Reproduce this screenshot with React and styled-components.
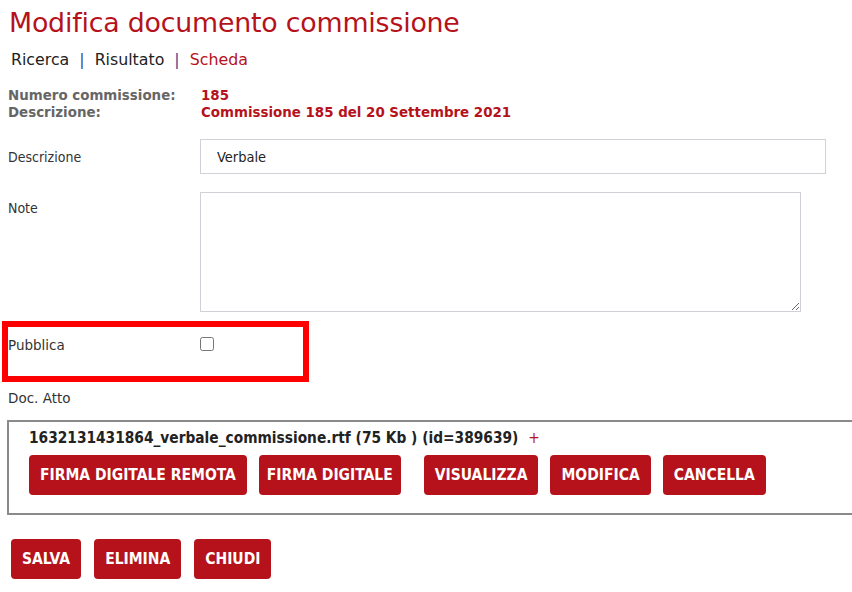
import React from "react";
import styled, { createGlobalStyle } from "styled-components";

const GlobalStyle = createGlobalStyle`
  html, body {
    margin: 0;
    padding: 0;
    background: #ffffff;
    overflow: hidden;
  }
`;

const RED = "#b5121b";

const App = () => {
  return (
    <Page>
      <GlobalStyle />
      <Title>Modifica documento commissione</Title>
      <Breadcrumb>
        <Crumb>Ricerca</Crumb>
        <Sep>|</Sep>
        <Crumb>Risultato</Crumb>
        <Sep>|</Sep>
        <Crumb $active>Scheda</Crumb>
      </Breadcrumb>

      <Info>
        <InfoLabel>Numero commissione:</InfoLabel>
        <InfoValue>185</InfoValue>
        <InfoLabel>Descrizione:</InfoLabel>
        <InfoValue>Commissione 185 del 20 Settembre 2021</InfoValue>
      </Info>

      <FormRow>
        <Label>Descrizione</Label>
        <TextInput defaultValue="Verbale" />
      </FormRow>

      <FormRow $top>
        <Label $offset>Note</Label>
        <TextArea />
      </FormRow>

      <Highlight>
        <Plain>Pubblica</Plain>
        <Check type="checkbox" />
      </Highlight>

      <SectionTitle>Doc. Atto</SectionTitle>

      <DocBox>
        <FileName>
          1632131431864_verbale_commissione.rtf (75 Kb ) (id=389639)
          <Plus>+</Plus>
        </FileName>
        <ButtonRow>
          <Button>FIRMA DIGITALE REMOTA</Button>
          <Button $narrow>FIRMA DIGITALE</Button>
          <Button $spaced>VISUALIZZA</Button>
          <Button>MODIFICA</Button>
          <Button>CANCELLA</Button>
        </ButtonRow>
      </DocBox>

      <Actions>
        <Button $small>SALVA</Button>
        <Button $small>ELIMINA</Button>
        <Button $small>CHIUDI</Button>
      </Actions>
    </Page>
  );
};

const Page = styled.div`
  padding: 6px 0 0 0;
  font-family: "DejaVu Sans", Verdana, sans-serif;
  width: 852px;
`;

const Title = styled.h1`
  margin: 0 0 0 9px;
  font-size: 26.8px;
  font-weight: normal;
  color: ${RED};
  letter-spacing: -0.2px;
  line-height: 34px;
`;

const Breadcrumb = styled.nav`
  display: flex;
  gap: 10px;
  margin: 9px 0 0 11px;
  font-size: 15.8px;
  line-height: 22px;
`;

const Crumb = styled.a`
  color: ${(p) => (p.$active ? RED : "#222222")};
  text-decoration: none;
`;

const Sep = styled.span`
  color: #3b4a8f;
`;

const Info = styled.div`
  display: grid;
  grid-template-columns: 193px auto;
  margin: 16px 0 0 8px;
  font-size: 13.4px;
  font-weight: bold;
  line-height: 17px;
`;

const InfoLabel = styled.span`
  color: #666666;
`;

const InfoValue = styled.span`
  color: ${RED};
`;

const FormRow = styled.div`
  display: grid;
  grid-template-columns: 192px auto;
  align-items: ${(p) => (p.$top ? "start" : "center")};
  margin: 18px 0 0 8px;
`;

const Label = styled.div`
  font-family: "DejaVu Sans Condensed", "Liberation Sans Narrow", sans-serif;
  font-size: 14px;
  color: #333333;
  line-height: 20px;
  margin-top: ${(p) => (p.$offset ? "6px" : "0")};
`;

const Plain = styled.div`
  font-size: 13.5px;
  color: #333333;
  line-height: 20px;
`;

const SectionTitle = styled(Plain)`
  margin: 6px 0 0 8px;
`;

const TextInput = styled.input`
  box-sizing: border-box;
  width: 626px;
  height: 35px;
  border: 1px solid #cfd3d8;
  padding: 0 16px;
  font-family: "DejaVu Sans Condensed", sans-serif;
  font-size: 14.5px;
  color: #222222;
  outline: none;
`;

const TextArea = styled.textarea`
  box-sizing: border-box;
  width: 601px;
  height: 120px;
  border: 1px solid #cfd3d8;
  margin: 0;
  outline: none;
  display: block;
`;

const Highlight = styled.div`
  box-sizing: border-box;
  display: grid;
  grid-template-columns: 192px auto;
  align-items: start;
  width: 307px;
  height: 61px;
  margin: 9px 0 0 2px;
  border: 6px solid #ff0000;
  padding: 8px 0 0 0;
`;

const Check = styled.input`
  width: 14px;
  height: 14px;
  margin: 2px 0 0 0;
  accent-color: #666;
`;

const DocBox = styled.div`
  box-sizing: border-box;
  width: 870px;
  height: 95px;
  margin: 12px 0 0 7px;
  border: 2px solid #8a8a8a;
  padding: 6px 0 0 20px;
`;

const FileName = styled.div`
  font-family: "DejaVu Sans Condensed", sans-serif;
  font-size: 15.3px;
  font-weight: 600;
  color: #222222;
  line-height: 20px;
`;

const Plus = styled.span`
  color: ${RED};
  font-weight: normal;
  margin-left: 10px;
`;

const ButtonRow = styled.div`
  display: flex;
  gap: 12px;
  margin-top: 7px;
`;

const Actions = styled.div`
  display: flex;
  gap: 13px;
  margin: 24px 0 0 11px;
`;

const Button = styled.button`
  height: 40px;
  padding: 0 ${(p) => (p.$narrow ? "8px" : "11px")};
  margin-left: ${(p) => (p.$spaced ? "11px" : "0")};
  border: none;
  border-radius: 4px;
  background: ${RED};
  color: #ffffff;
  font-family: "DejaVu Sans Condensed", "Liberation Sans Narrow", sans-serif;
  font-weight: bold;
  font-size: 15.5px;
  cursor: pointer;
`;

export default App;
